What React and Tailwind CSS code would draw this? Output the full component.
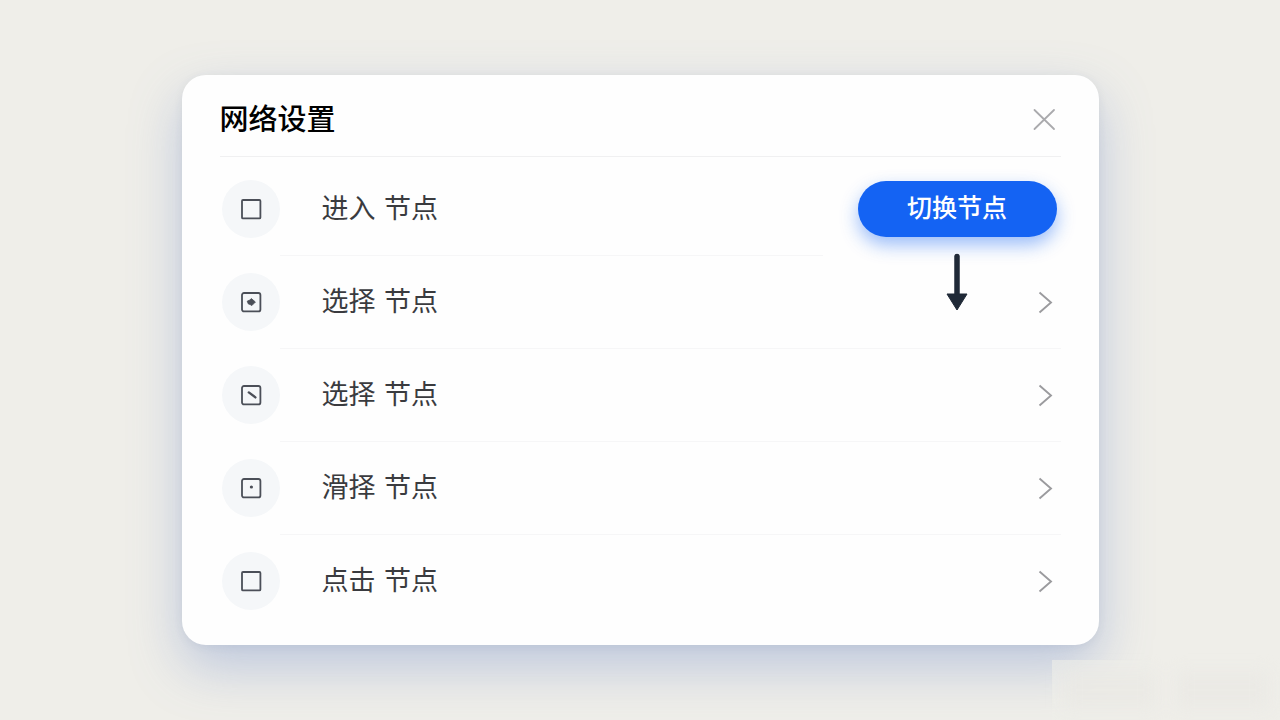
import clsx from "clsx";

const rows = [
  { id: "enter", label: "进入 节点", mark: null, action: true },
  { id: "select", label: "选择 节点", mark: "diamond" },
  { id: "choose", label: "选择 节点", mark: "slash" },
  { id: "slide", label: "滑择 节点", mark: "dot" },
  { id: "click", label: "点击 节点", mark: null },
];

function NodeIcon({ mark }) {
  return (
    <span className="flex size-[58px] shrink-0 items-center justify-center rounded-full bg-[#f5f7f9]">
      <svg width="22" height="22" viewBox="0 0 22 22" fill="none" stroke="#4b4f58" strokeWidth="1.8" aria-hidden="true">
        <rect x="2" y="2" width="18.4" height="18.4" rx={mark ? 2 : 1} />
        {mark === "diamond" && (
          <path d="M7.2 10.2 9.8 9l1.6-1.4 4 3.4-3.6 3.6-1.8-1.2-1.6-.4Z" fill="#4b4f58" strokeWidth="0.8" strokeLinejoin="round" />
        )}
        {mark === "slash" && <path d="m8.8 8.4 6.6 5" strokeWidth="2.4" strokeLinecap="round" />}
        {mark === "dot" && <circle cx="11.4" cy="10" r="1.6" fill="#4b4f58" stroke="none" />}
      </svg>
    </span>
  );
}

function ChevronIcon() {
  return (
    <svg width="16" height="24" viewBox="0 0 16 24" fill="none" stroke="#9b9b9e" strokeWidth="1.9" className="ml-auto mr-1.5" aria-hidden="true">
      <path d="M2.5 2.5 14 12.5l-11.5 10" />
    </svg>
  );
}

function DownArrow() {
  return (
    <svg width="22" height="58" viewBox="0 0 22 58" className="pointer-events-none absolute left-1/2 top-full mt-4 -translate-x-1/2" aria-hidden="true">
      <path d="M11 3.5V44" stroke="#1f2937" strokeWidth="5.5" strokeLinecap="round" />
      <path d="M1 41h20L11 57Z" fill="#1f2937" stroke="#1f2937" strokeLinejoin="round" />
    </svg>
  );
}

function SwitchButton() {
  return (
    <div className="relative ml-auto mr-0.5">
      <button
        type="button"
        className="block h-14 w-[199px] rounded-full bg-[#1463f3] text-[25px] font-medium leading-9 text-white shadow-[0_8px_18px_rgba(20,99,243,0.42)]"
      >
        切换节点
      </button>
      <DownArrow />
    </div>
  );
}

function SettingRow({ label, mark, action, last }) {
  const content = (
    <>
      <NodeIcon mark={mark} />
      <span className="ml-[42px] text-[27px] leading-9">{label}</span>
    </>
  );

  return (
    <li>
      {action ? (
        <div className="flex h-[92px] items-center px-0.5">
          {content}
          <SwitchButton />
        </div>
      ) : (
        <button type="button" className="flex h-[92px] w-full items-center px-0.5 text-left">
          {content}
          <ChevronIcon />
        </button>
      )}
      {!last && <hr className={clsx("ml-[60px] border-[#f6f6f7]", action && "mr-[238px]")} />}
    </li>
  );
}

export default function App() {
  return (
    <main className="relative flex min-h-screen items-center justify-center overflow-hidden bg-[#efeee9] font-['DejaVu_Sans','Noto_Sans_CJK_SC',sans-serif] text-[#3a3b3f]">
      <section
        aria-labelledby="settings-title"
        className="w-full max-w-[917px] rounded-3xl bg-[#fefefe] px-[38px] pb-[18px] shadow-[0_22px_52px_rgba(100,130,200,0.36),0_2px_10px_rgba(60,70,90,0.07)]"
      >
        <header className="flex h-[82px] items-center justify-between border-b border-[#f0f0f1] pt-2">
          <h1 id="settings-title" className="text-[29px] font-medium leading-9 text-black">
            网络设置
          </h1>
          <button type="button" aria-label="关闭" className="mr-[5px]">
            <svg width="24" height="24" viewBox="0 0 24 24" fill="none" stroke="#aaaaad" strokeWidth="1.8" strokeLinecap="round" aria-hidden="true">
              <path d="m2.5 2 19.5 19M22 2 2.5 21" />
            </svg>
          </button>
        </header>

        <ul className="pt-1.5">
          {rows.map((row, i) => (
            <SettingRow key={row.id} label={row.label} mark={row.mark} action={row.action} last={i === rows.length - 1} />
          ))}
        </ul>
      </section>

      <div className="absolute bottom-0 right-0 h-[60px] w-[228px] bg-[#efeee9]/60" aria-hidden="true">
        <div className="flex h-full gap-5 px-3 py-3 blur-sm">
          <span className="flex-1 bg-[#e9e8e4]/70" />
          <span className="flex-1 bg-[#e9e8e4]/70" />
        </div>
      </div>
    </main>
  );
}
